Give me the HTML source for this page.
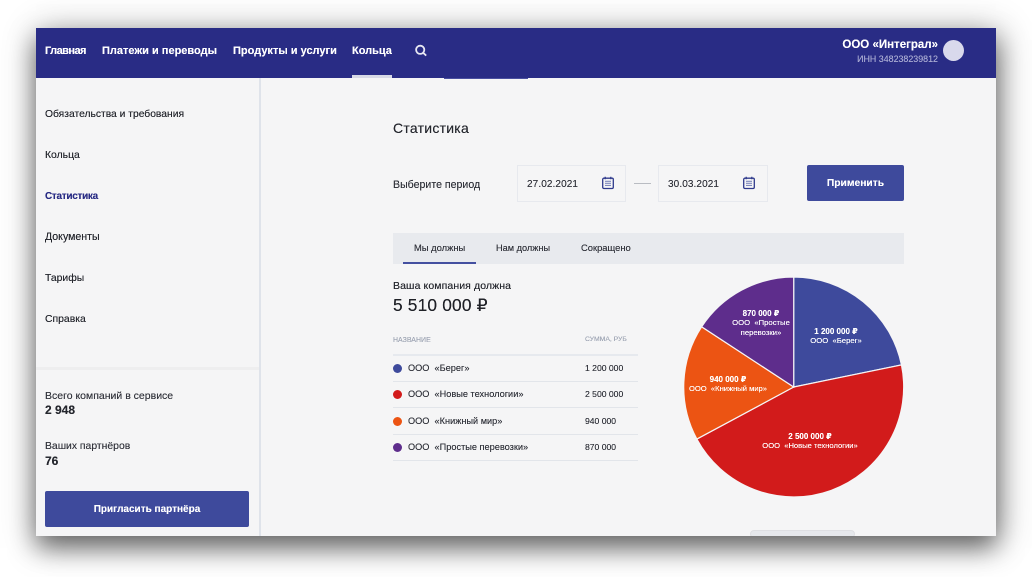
<!DOCTYPE html>
<html lang="ru"><head><meta charset="utf-8"><title>Статистика</title>
<style>
html,body{margin:0;padding:0;background:#fff}
body{width:1032px;height:577px;overflow:hidden;position:relative;font-family:"Liberation Sans","DejaVu Sans",sans-serif;color:#25272e}
#app{position:absolute;left:36px;top:28px;width:960px;height:508px;background:#f5f5f6;box-shadow:0 12px 24px rgba(0,0,0,.5),3px 3px 34px rgba(0,0,0,.3);overflow:hidden}
.t{position:absolute;white-space:nowrap;line-height:1;filter:blur(.3px);text-shadow:0 0 .3px currentColor}
.b{font-weight:bold}
.box{position:absolute}
.w{color:#fff}
.c{transform:translateX(-50%);text-align:center}
</style></head><body>
<div id="app">
<div class="box" style="left:0;top:0;width:960px;height:50px;background:#292c85"></div>
<div class="box" style="left:316px;top:47px;width:40px;height:3px;background:#d7d9e6"></div>
<div class="box" style="left:408px;top:50px;width:84px;height:1px;background:#4a50a0"></div>
<div class="box" style="left:223px;top:50px;width:2px;height:458px;background:#dfe3ea"></div>
<div class="box" style="left:0;top:339px;width:223px;height:3px;background:#eeeeef"></div>
<div class="box" style="left:714px;top:502px;width:105px;height:8px;background:#e6e8ec;border:1px solid #dedfe3;border-radius:5px;box-sizing:border-box"></div>
</div>
<div class="t b w" style="left:45px;top:46px;font-size:11px;letter-spacing:-.55px">Главная</div>
<div class="t b w" style="left:102px;top:46px;font-size:11px">Платежи и переводы</div>
<div class="t b w" style="left:233px;top:46px;font-size:11px">Продукты и услуги</div>
<div class="t b w" style="left:352px;top:46px;font-size:11px">Кольца</div>
<svg class="box" style="left:413px;top:43px" width="15" height="15" viewBox="0 0 15 15" fill="none" stroke="#e8e9f3" stroke-width="1.8"><circle cx="7.2" cy="6.8" r="4.1"/><path d="M10.2 9.8l3 2.8"/></svg>
<div class="t b w" style="right:94px;top:40px;font-size:11.5px">ООО «Интеграл»</div>
<div class="t" style="right:94px;top:55px;font-size:8.9px;color:#a9abd2">ИНН 348238239812</div>
<div class="box" style="left:943px;top:40px;width:21px;height:21px;border-radius:50%;background:#d9d9ec"></div>

<div class="t" style="left:45px;top:110px;font-size:10.3px">Обязательства и требования</div>
<div class="t" style="left:45px;top:151px;font-size:10.4px">Кольца</div>
<div class="t b" style="left:45px;top:192px;font-size:10px;letter-spacing:-.3px;color:#292c85">Статистика</div>
<div class="t" style="left:45px;top:232px;font-size:10.6px">Документы</div>
<div class="t" style="left:45px;top:274px;font-size:10.4px">Тарифы</div>
<div class="t" style="left:45px;top:315px;font-size:10.4px">Справка</div>

<div class="t" style="left:45px;top:391px;font-size:10.5px;color:#33353d">Всего компаний в сервисе</div>
<div class="t b" style="left:45px;top:404px;font-size:12px">2 948</div>
<div class="t" style="left:45px;top:442px;font-size:10.4px;color:#33353d">Ваших партнёров</div>
<div class="t b" style="left:45px;top:455px;font-size:12px">76</div>
<div class="box" style="left:45px;top:491px;width:204px;height:36px;border-radius:2px;background:#3e4a9c"></div>
<div class="t b w c" style="left:147px;top:505px;font-size:10px">Пригласить партнёра</div>

<div class="t" style="left:393px;top:121px;font-size:14px;letter-spacing:.25px">Статистика</div>
<div class="t" style="left:393px;top:180px;font-size:10.6px;color:#33353d">Выберите период</div>
<div class="box" style="left:517px;top:165px;width:109px;height:37px;box-sizing:border-box;border:1px solid #e7e9ee"></div>
<div class="box" style="left:658px;top:165px;width:110px;height:37px;box-sizing:border-box;border:1px solid #e7e9ee"></div>
<div class="t" style="left:527px;top:180px;font-size:10px;letter-spacing:.1px;color:#33353d">27.02.2021</div>
<div class="t" style="left:668px;top:180px;font-size:10px;letter-spacing:.1px;color:#33353d">30.03.2021</div>
<svg class="box" style="left:601px;top:176px" width="14" height="14" viewBox="0 0 14 14" fill="none" stroke="#2f3a8c"><rect x="1.7" y="2.2" width="10.6" height="10.3" rx="1.2" stroke-width="1.3"/><path d="M4.2 .8v2.4M9.8 .8v2.4" stroke-width="1.2"/><path d="M4 5.3h6M4 7.3h6M4 9.4h6" stroke="#7f88bd" stroke-width="1.1"/></svg>
<svg class="box" style="left:742px;top:176px" width="14" height="14" viewBox="0 0 14 14" fill="none" stroke="#2f3a8c"><rect x="1.7" y="2.2" width="10.6" height="10.3" rx="1.2" stroke-width="1.3"/><path d="M4.2 .8v2.4M9.8 .8v2.4" stroke-width="1.2"/><path d="M4 5.3h6M4 7.3h6M4 9.4h6" stroke="#7f88bd" stroke-width="1.1"/></svg>
<div class="box" style="left:634px;top:183px;width:17px;height:1px;background:#b9bcc2"></div>
<div class="box" style="left:807px;top:165px;width:97px;height:36px;border-radius:2px;background:#3e4a9c"></div>
<div class="t b w c" style="left:855.5px;top:179px;font-size:10.3px">Применить</div>

<div class="box" style="left:393px;top:233px;width:511px;height:31px;background:#e8eaee"></div>
<div class="box" style="left:403px;top:262px;width:73px;height:2px;background:#4450a0"></div>
<div class="t" style="left:414px;top:243px;font-size:9.4px;color:#33353d">Мы должны</div>
<div class="t" style="left:496px;top:244px;font-size:9.2px;color:#33353d">Нам должны</div>
<div class="t" style="left:581px;top:243px;font-size:9.4px;color:#33353d">Сокращено</div>

<div class="t" style="left:393px;top:281px;font-size:10.5px;letter-spacing:.1px">Ваша компания должна</div>
<div class="t" style="left:393px;top:297px;font-size:17.3px;letter-spacing:.2px;color:#1f2127">5 510 000 ₽</div>
<div class="t" style="left:393px;top:337px;font-size:7px;color:#9ea5b4">НАЗВАНИЕ</div>
<div class="t" style="left:585px;top:337px;font-size:6.8px;color:#9ea5b4">СУММА, РУБ</div>

<div class="box" style="left:393px;top:354px;width:245px;height:2px;background:#e6e9ee"></div>
<div class="box" style="left:393px;top:381px;width:245px;height:1px;background:#e2e5ea"></div>
<div class="box" style="left:393px;top:407px;width:245px;height:1px;background:#e2e5ea"></div>
<div class="box" style="left:393px;top:434px;width:245px;height:1px;background:#e2e5ea"></div>
<div class="box" style="left:393px;top:460px;width:245px;height:1px;background:#e2e5ea"></div>

<div class="box" style="left:393px;top:364px;width:9px;height:9px;border-radius:50%;background:#3e4a9c"></div>
<div class="box" style="left:393px;top:390px;width:9px;height:9px;border-radius:50%;background:#d21b1b"></div>
<div class="box" style="left:393px;top:417px;width:9px;height:9px;border-radius:50%;background:#ec5413"></div>
<div class="box" style="left:393px;top:443px;width:9px;height:9px;border-radius:50%;background:#5e2d8c"></div>

<div class="t" style="left:408px;top:364px;font-size:9.2px;color:#33353d">ООО &nbsp;«Берег»</div>
<div class="t" style="left:408px;top:390px;font-size:9.2px;color:#33353d">ООО &nbsp;«Новые технологии»</div>
<div class="t" style="left:408px;top:417px;font-size:9.2px;color:#33353d">ООО &nbsp;«Книжный мир»</div>
<div class="t" style="left:408px;top:443px;font-size:9.2px;color:#33353d">ООО &nbsp;«Простые перевозки»</div>
<div class="t" style="left:585px;top:364px;font-size:8.6px;color:#33353d">1 200 000</div>
<div class="t" style="left:585px;top:390px;font-size:8.6px;color:#33353d">2 500 000</div>
<div class="t" style="left:585px;top:417px;font-size:8.6px;color:#33353d">940 000</div>
<div class="t" style="left:585px;top:443px;font-size:8.6px;color:#33353d">870 000</div>

<svg class="box" style="left:680px;top:270px" width="230" height="234" viewBox="680 270 230 234" stroke="#f5f5f6" stroke-width="1.2">
<path d="M793.7 387V277A110 110 0 0 1 901.46 364.9Z" fill="#3e4a9c"/>
<path d="M793.7 387L901.46 364.9A110 110 0 0 1 696.83 439.09Z" fill="#d21b1b"/>
<path d="M793.7 387L696.83 439.09A110 110 0 0 1 701.65 326.8Z" fill="#ec5413"/>
<path d="M793.7 387L701.65 326.8A110 110 0 0 1 793.7 277Z" fill="#5e2d8c"/>
</svg>

<div class="t b w c" style="left:836px;top:328px;font-size:8px">1 200 000 ₽</div>
<div class="t w c" style="left:836px;top:337px;font-size:7.7px">ООО &nbsp;«Берег»</div>
<div class="t b w c" style="left:810px;top:433px;font-size:8px">2 500 000 ₽</div>
<div class="t w c" style="left:810px;top:442px;font-size:7.6px">ООО &nbsp;«Новые технологии»</div>
<div class="t b w c" style="left:728px;top:376px;font-size:8px">940 000 ₽</div>
<div class="t w c" style="left:728px;top:385px;font-size:7.6px">ООО &nbsp;«Книжный мир»</div>
<div class="t b w c" style="left:761px;top:310px;font-size:8px">870 000 ₽</div>
<div class="t w c" style="left:761px;top:319px;font-size:7.7px">ООО &nbsp;«Простые</div>
<div class="t w c" style="left:761px;top:329px;font-size:7.7px">перевозки»</div>
</body></html>
